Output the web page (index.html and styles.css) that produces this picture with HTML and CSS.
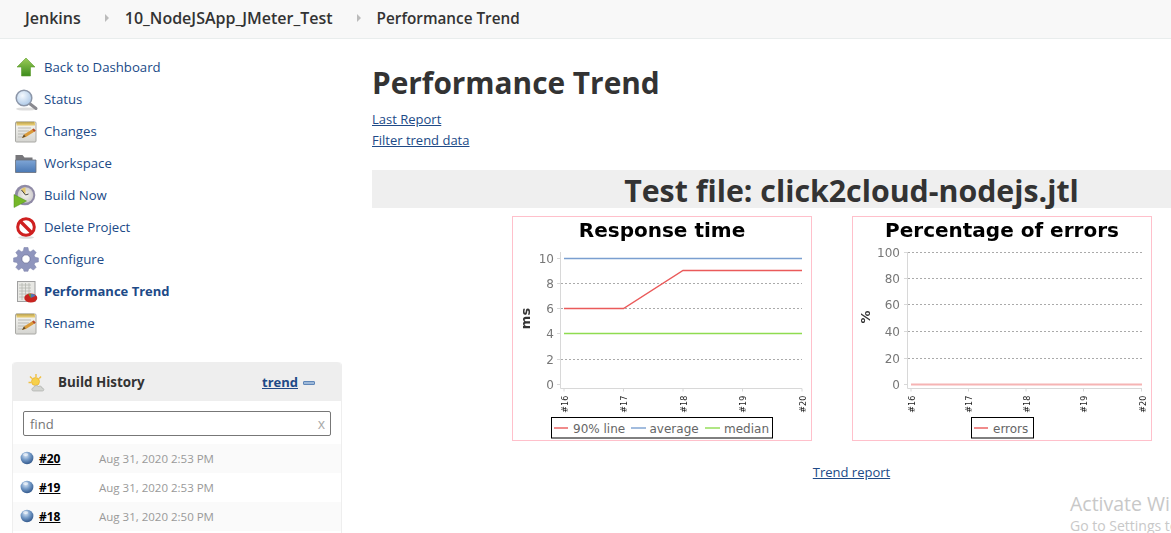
FILE: index.html
```html
<!DOCTYPE html>
<html lang="en">
<head>
<meta charset="utf-8">
<title>Performance Trend</title>
<link rel="stylesheet" href="styles.css">
</head>
<body>
<svg class="defs" aria-hidden="true">
  <defs>
    <linearGradient id="gGreen" x1="0" y1="0" x2="0" y2="1"><stop offset="0" stop-color="#9ccc58"/><stop offset="1" stop-color="#3c8c1c"/></linearGradient>
    <linearGradient id="gFolder" x1="0" y1="0" x2="0" y2="1"><stop offset="0" stop-color="#7fa6d6"/><stop offset="1" stop-color="#4a78b4"/></linearGradient>
    <linearGradient id="gPad" x1="0" y1="0" x2="0" y2="1"><stop offset="0" stop-color="#f8f8f4"/><stop offset="1" stop-color="#d4d4d0"/></linearGradient>
    <radialGradient id="gBall" cx=".4" cy=".3" r=".8"><stop offset="0" stop-color="#d6e4f4"/><stop offset=".45" stop-color="#7399c6"/><stop offset="1" stop-color="#23497e"/></radialGradient>
    <radialGradient id="gGlass" cx=".4" cy=".35" r=".7"><stop offset="0" stop-color="#f4f9fe"/><stop offset="1" stop-color="#a9c6e6"/></radialGradient>
    <radialGradient id="gClock" cx=".5" cy=".5" r=".6"><stop offset="0" stop-color="#f6f4ee"/><stop offset="1" stop-color="#c6c4c8"/></radialGradient>
    <symbol id="iPad" viewBox="0 0 24 24">
      <rect x="1.500" y="3" width="20.500" height="20" rx="1" fill="url(#gPad)" stroke="#a8a8a4"/>
      <rect x="2.500" y="3" width="18.500" height="3.500" fill="#e3c76c"/>
      <path d="M3 2.500v2M5 2.500v2M7 2.500v2M9 2.500v2M11 2.500v2M13 2.500v2M15 2.500v2M17 2.500v2M19 2.500v2" stroke="#8a7a3c" stroke-width=".8"/>
      <path d="M4 9h13M4 12h11M4 15h8M4 18h6" stroke="#b9b9b5"/>
      <path d="M8 19l2-3.400 9.500-6 2 2.400-9.600 6z" fill="#d99a3a"/>
      <path d="M8 19l2-3.400 1.600 1.900z" fill="#5a4a32"/>
      <path d="M18.200 10.400l1.600-1 2 2.400-1.700 1z" fill="#b4472c"/>
    </symbol>
    <symbol id="iBall" viewBox="0 0 14 14">
      <ellipse cx="7" cy="7" rx="6.400" ry="6.200" fill="url(#gBall)"/>
      <ellipse cx="5.600" cy="3.400" rx="2.600" ry="1.500" fill="#fff" opacity=".55"/>
    </symbol>
  </defs>
</svg>

<header class="crumbs">
  <a class="crumb" href="#">Jenkins</a>
  <span class="crumb-arrow"></span>
  <a class="crumb" href="#">10_NodeJSApp_JMeter_Test</a>
  <span class="crumb-arrow"></span>
  <a class="crumb crumb-last" href="#">Performance Trend</a>
</header>

<div class="layout">
  <aside class="side">
    <nav class="tasks">
      <a class="task" href="#">
        <svg class="ticon" viewBox="0 0 24 24"><path d="M12 3l9 9h-4.500v9h-9v-9H3z" fill="url(#gGreen)" stroke="#5b9a2c" stroke-width=".6"/></svg>
        <span>Back to Dashboard</span>
      </a>
      <a class="task" href="#">
        <svg class="ticon" viewBox="0 0 24 24"><ellipse cx="12" cy="22" rx="10" ry="1.600" fill="#ddd"/><path d="M15.500 16.500l6.500 5" stroke="#8a8a90" stroke-width="3" stroke-linecap="round"/><circle cx="10" cy="11" r="7.800" fill="url(#gGlass)" stroke="#8c96a8" stroke-width="1.500"/></svg>
        <span>Status</span>
      </a>
      <a class="task" href="#">
        <svg class="ticon"><use href="#iPad"/></svg>
        <span>Changes</span>
      </a>
      <a class="task" href="#">
        <svg class="ticon" viewBox="0 0 24 24"><path d="M1.500 21V4h7l2 2.500h8V9H1.500z" fill="#77777b"/><path d="M1.500 21.500V9h20.500v12.500z" fill="url(#gFolder)" stroke="#6a6f78" stroke-width=".8"/></svg>
        <span>Workspace</span>
      </a>
      <a class="task" href="#">
        <svg class="ticon" viewBox="0 0 24 24"><circle cx="11" cy="12" r="10.300" fill="#8f8aa6"/><circle cx="11.500" cy="12" r="7.800" fill="url(#gClock)"/><path d="M11.500 12L7 6.500A7.500 7.500 0 0 1 11.500 4.300z" fill="#e3c76c"/><path d="M11.500 12L7.500 7M11.500 12l3-1" stroke="#444" stroke-width="1"/><path d="M0 11.500v13L12.500 18z" fill="#76b82a" stroke="#4f8f1c" stroke-width=".5"/></svg>
        <span>Build Now</span>
      </a>
      <a class="task" href="#">
        <svg class="ticon" viewBox="0 0 24 24"><ellipse cx="12" cy="22.500" rx="8" ry="1.300" fill="#ddd"/><circle cx="12" cy="12" r="8.300" fill="#fff" stroke="#cf2020" stroke-width="3"/><path d="M6.500 6.500l11 11" stroke="#cf2020" stroke-width="3.400"/></svg>
        <span>Delete Project</span>
      </a>
      <a class="task" href="#">
        <svg class="ticon" viewBox="0 0 24 24"><path d="M10 0.500h4l.6 3.400 2 .8 2.800-2 2.800 2.800-2 2.800.8 2 3.400.6v4l-3.400.6-.8 2 2 2.800-2.800 2.800-2.800-2-2 .8-.6 2.400h-4l-.6-2.400-2-.8-2.800 2-2.800-2.800 2-2.800-.8-2-3.400-.6v-4l3.400-.6.800-2-2-2.800 2.800-2.800 2.800 2 2-.8z" fill="#8f95bd" stroke="#787ea6" stroke-width=".5"/><circle cx="12" cy="12" r="4.200" fill="#fff" stroke="#6b7097" stroke-width=".8"/></svg>
        <span>Configure</span>
      </a>
      <a class="task task-on" href="#">
        <svg class="ticon" viewBox="0 0 24 24"><rect x="3.500" y="2.500" width="17.500" height="20" fill="#e8e8e4" stroke="#a0a0a0"/><path d="M5 6h12M5 9h12M5 12h12M5 15h12M5 18h12M8 4v17M11.500 4v17M15 4v17" stroke="#b5b8b0" stroke-width=".8"/><ellipse cx="16.800" cy="19" rx="6.500" ry="4.500" fill="#c8231f"/><path d="M16.800 19v-4.300a6.500 4.500 0 0 1 5 2z" fill="#4d78b8"/><path d="M16.800 19v-4.300l-2.500 .2z" fill="#62a83a"/></svg>
        <span>Performance Trend</span>
      </a>
      <a class="task" href="#">
        <svg class="ticon"><use href="#iPad"/></svg>
        <span>Rename</span>
      </a>
    </nav>

    <section class="history">
      <div class="history-head">
        <svg class="weather" viewBox="0 0 18 18"><path d="M8 1v3M2 3.500l2 2M0.500 9.500h3M13 3.500l-1.800 2" stroke="#f0c040" stroke-width="1.400"/><circle cx="7.500" cy="8.500" r="4" fill="#f6d04a" stroke="#e8a820" stroke-width=".6"/><path d="M5.500 18c-2 0-2.500-3 0-3.200.4-2.200 3.400-3 5-1.300 1.500-1 3.500-.2 3.600 1.600 2.400 .2 2.200 2.900 .2 2.900z" fill="#d2d4d0" stroke="#a4a6a2" stroke-width=".6"/></svg>
        <span class="history-title">Build History</span>
        <a class="trend" href="#">trend</a>
        <span class="minus"></span>
      </div>
      <div class="search">
        <div class="search-box"><span class="find">find</span><span class="clear">x</span></div>
      </div>
      <div class="build alt">
        <svg class="ball"><use href="#iBall"/></svg>
        <a class="build-no" href="#">#20</a>
        <span class="build-date">Aug 31, 2020 2:53 PM</span>
      </div>
      <div class="build">
        <svg class="ball"><use href="#iBall"/></svg>
        <a class="build-no" href="#">#19</a>
        <span class="build-date">Aug 31, 2020 2:53 PM</span>
      </div>
      <div class="build alt">
        <svg class="ball"><use href="#iBall"/></svg>
        <a class="build-no" href="#">#18</a>
        <span class="build-date">Aug 31, 2020 2:50 PM</span>
      </div>
    </section>
  </aside>

  <main class="main">
    <h1 class="title">Performance Trend</h1>
    <div class="links">
      <a href="#">Last Report</a>
      <a href="#">Filter trend data</a>
    </div>
    <h2 class="file">Test file: click2cloud-nodejs.jtl</h2>
    <div class="charts">
      <figure class="chart">
        <svg class="plot" viewBox="0 0 298 223">
          <text class="c-title" x="149" y="20">Response time</text>
          <path class="grid" d="M48 66.500H289M48 91.500H289M48 142.500H289"/>
          <path class="axis" d="M47.500 35V171.500H289M51 171.500v3M110.500 171.500v3M170 171.500v3M229.500 171.500v3M289 171.500v3M44 41.500h3M44 66.500h3M44 91.500h3M44 116.500h3M44 142.500h3M44 167.500h3"/>
          <text class="c-tick" x="41" y="45.700">10</text>
          <text class="c-tick" x="41" y="70.700">8</text>
          <text class="c-tick" x="41" y="95.700">6</text>
          <text class="c-tick" x="41" y="120.700">4</text>
          <text class="c-tick" x="41" y="146.700">2</text>
          <text class="c-tick" x="41" y="171.700">0</text>
          <text class="c-ylabel" transform="translate(17 101.500) rotate(-90)">ms</text>
          <path class="l-blue" d="M51 41.500H289"/>
          <path class="l-red" d="M51 91.500H110.500L170 53.500H289"/>
          <path class="l-green" d="M51 116.500H289"/>
          <g class="c-xs">
            <text textLength="17" lengthAdjust="spacingAndGlyphs" transform="translate(54.500 195.700) rotate(-90)">#16</text>
            <text textLength="17" lengthAdjust="spacingAndGlyphs" transform="translate(114 195.700) rotate(-90)">#17</text>
            <text textLength="17" lengthAdjust="spacingAndGlyphs" transform="translate(173.500 195.700) rotate(-90)">#18</text>
            <text textLength="17" lengthAdjust="spacingAndGlyphs" transform="translate(233 195.700) rotate(-90)">#19</text>
            <text textLength="17" lengthAdjust="spacingAndGlyphs" transform="translate(292.500 195.700) rotate(-90)">#20</text>
          </g>
          <rect class="legend" x="38.500" y="200.500" width="221" height="20.500"/>
          <path class="l-red" d="M41 211H55"/>
          <text class="c-leg" x="60" y="215.500">90% line</text>
          <path class="l-blue" d="M118 211H133"/>
          <text class="c-leg" x="136.500" y="215.500">average</text>
          <path class="l-green" d="M192 211H207"/>
          <text class="c-leg" x="211" y="215.500">median</text>
        </svg>
      </figure>
      <figure class="chart">
        <svg class="plot" viewBox="0 0 298 223">
          <text class="c-title" x="149" y="20">Percentage of errors</text>
          <path class="grid" d="M55 35.500H289M55 61.500H289M55 87.500H289M55 114.500H289M55 141.500H289"/>
          <path class="axis" d="M54.500 35V171.500H289M58 171.500v3M115.500 171.500v3M173 171.500v3M230.500 171.500v3M288.500 171.500v3M51 35.500h3M51 61.500h3M51 87.500h3M51 114.500h3M51 141.500h3M51 167.500h3"/>
          <text class="c-tick" x="47" y="39.700">100</text>
          <text class="c-tick" x="47" y="65.700">80</text>
          <text class="c-tick" x="47" y="91.700">60</text>
          <text class="c-tick" x="47" y="118.700">40</text>
          <text class="c-tick" x="47" y="145.700">20</text>
          <text class="c-tick" x="47" y="171.700">0</text>
          <text class="c-ylabel" transform="translate(17 100) rotate(-90)">%</text>
          <path class="l-err" d="M58 167.500H289"/>
          <g class="c-xs">
            <text textLength="17" lengthAdjust="spacingAndGlyphs" transform="translate(61.500 195.700) rotate(-90)">#16</text>
            <text textLength="17" lengthAdjust="spacingAndGlyphs" transform="translate(119 195.700) rotate(-90)">#17</text>
            <text textLength="17" lengthAdjust="spacingAndGlyphs" transform="translate(176.500 195.700) rotate(-90)">#18</text>
            <text textLength="17" lengthAdjust="spacingAndGlyphs" transform="translate(234 195.700) rotate(-90)">#19</text>
            <text textLength="17" lengthAdjust="spacingAndGlyphs" transform="translate(292.500 195.700) rotate(-90)">#20</text>
          </g>
          <rect class="legend" x="118.500" y="200.500" width="62" height="20.500"/>
          <path class="l-red" d="M121 211H135"/>
          <text class="c-leg" x="140" y="215.500">errors</text>
        </svg>
      </figure>
    </div>
    <p class="trend-report"><a href="#">Trend report</a></p>
  </main>
</div>

<div class="watermark">
  <div class="wm-1">Activate Windows</div>
  <div class="wm-2">Go to Settings to activate Windows.</div>
</div>
</body>
</html>
```
FILE: styles.css
```css
html, body {
  margin: 0;
  height: 533px;
  overflow: hidden;
}
body {
  position: relative;
  font-family: "Open Sans", "Noto Sans", "Liberation Sans", sans-serif;
  font-size: 13px;
  color: #333;
  background: #fff;
}
.defs {
  position: absolute;
  width: 0;
  height: 0;
}
a {
  color: #204a87;
}

/* breadcrumb */
.crumbs {
  display: flex;
  align-items: center;
  box-sizing: border-box;
  height: 39px;
  padding: 0 0 2px 25px;
  background: #f8f8f8;
  border-bottom: 1px solid #e9eded;
}
.crumb {
  font-size: 16px;
  font-weight: 600;
  color: #333;
  text-decoration: none;
}
.crumb-last {
  font-size: 15.300px;
}
.crumb-arrow {
  width: 0;
  height: 0;
  margin: 0 16px 0 24px;
  border-left: 4px solid #bbb;
  border-top: 4px solid transparent;
  border-bottom: 4px solid transparent;
}

/* layout */
.layout {
  display: grid;
  grid-template-columns: 372px 799px;
}
.side {
  padding-top: 12px;
}
.tasks {
  display: flex;
  flex-direction: column;
}
.task {
  display: flex;
  align-items: center;
  height: 32px;
  padding-left: 14px;
  gap: 6px;
  font-size: 13.200px;
  color: #204a87;
  text-decoration: none;
}
.task-on {
  font-size: 13px;
  font-weight: 700;
}
.ticon {
  width: 24px;
  height: 24px;
  flex: none;
  overflow: visible;
}

/* build history */
.history {
  width: 328px;
  margin: 23px 0 0 12px;
  padding-bottom: 30px;
  border: 1px solid #eee;
  border-top: 0;
  border-radius: 4px 4px 0 0;
}
.history-head {
  display: flex;
  align-items: center;
  height: 39px;
  padding-left: 15px;
  background: #eee;
  border-radius: 4px 4px 0 0;
}
.weather {
  width: 18px;
  height: 18px;
  flex: none;
  overflow: visible;
}
.history-title {
  margin-left: 12px;
  font-size: 13.400px;
  font-weight: 700;
  color: #333;
}
.trend {
  margin-left: auto;
  font-weight: 700;
}
.minus {
  width: 10px;
  height: 2px;
  margin: 2px 26px 0 5px;
  background: #9db8d8;
  border: 1px solid #5f86b8;
  border-radius: 1px;
}
.search {
  padding: 10px 10px 8px;
}
.search-box {
  display: flex;
  justify-content: space-between;
  align-items: center;
  height: 23px;
  padding: 0 5px 0 6px;
  border: 1px solid #777;
  border-radius: 2px;
  color: #757575;
}
.clear {
  color: #aaa;
  font-size: 14px;
}
.build {
  display: flex;
  align-items: center;
  box-sizing: border-box;
  height: 29px;
  padding: 0 0 1px 7px;
}
.alt {
  background: #fafafa;
}
.ball {
  width: 14px;
  height: 14px;
  flex: none;
}
.build-no {
  width: 60px;
  margin-left: 5px;
  flex: none;
  font-size: 12px;
  font-weight: 700;
  color: #000;
}
.build-date {
  font-size: 11.500px;
  color: #999;
}

/* main */
.main {
  min-width: 0;
}
.title {
  margin: 23px 0 0;
  font-size: 29.800px;
  line-height: 41px;
  font-weight: 700;
  color: #333;
}
.links {
  display: flex;
  flex-direction: column;
  align-items: flex-start;
  margin-top: 6px;
  line-height: 21px;
}
.file {
  margin: 19px 0 8px;
  padding: 4px 0 0 160px;
  font-size: 30.300px;
  line-height: 34px;
  font-weight: 700;
  text-align: center;
  background: #efefef;
}
.charts {
  display: flex;
  gap: 40px;
  padding-left: 140px;
}
.chart {
  width: 298px;
  height: 223px;
  margin: 0;
  border: 1px solid #ffc0cb;
}
.plot {
  display: block;
  width: 298px;
  height: 223px;
  filter: blur(.3px);
}
.trend-report {
  margin: 22px 0 0;
  padding-left: 160px;
  text-align: center;
}

/* chart drawing */
.plot text {
  font-family: "DejaVu Sans", sans-serif;
}
.plot .c-title {
  font-size: 20px;
  font-weight: 700;
  fill: #000;
  text-anchor: middle;
}
.plot .c-tick {
  font-size: 12px;
  fill: #777;
  text-anchor: end;
}
.plot .c-ylabel {
  font-size: 13px;
  font-weight: 700;
  fill: #333;
  text-anchor: middle;
}
.plot .c-xs text {
  font-size: 9px;
  fill: #222;
}
.plot .c-leg {
  font-size: 12px;
  fill: #666;
}
.grid {
  fill: none;
  stroke: #aaa;
  stroke-dasharray: 2 2;
}
.axis {
  fill: none;
  stroke: #d8d8d8;
}
.l-red {
  fill: none;
  stroke: #ea5a5a;
  stroke-width: 1.400;
}
.l-blue {
  fill: none;
  stroke: #7a9fd0;
  stroke-width: 1.400;
}
.l-green {
  fill: none;
  stroke: #8fdc50;
  stroke-width: 1.400;
}
.l-err {
  fill: none;
  stroke: #f6b4b4;
  stroke-width: 2;
}
.legend {
  fill: #fff;
  stroke: #000;
}

/* watermark overlay */
.watermark {
  position: absolute;
  left: 1070px;
  top: 492px;
  width: 400px;
  color: #c8c8c8;
  pointer-events: none;
}
.wm-1 {
  font-size: 19.500px;
  line-height: 24px;
}
.wm-2 {
  font-size: 14px;
  line-height: 20px;
}
```
